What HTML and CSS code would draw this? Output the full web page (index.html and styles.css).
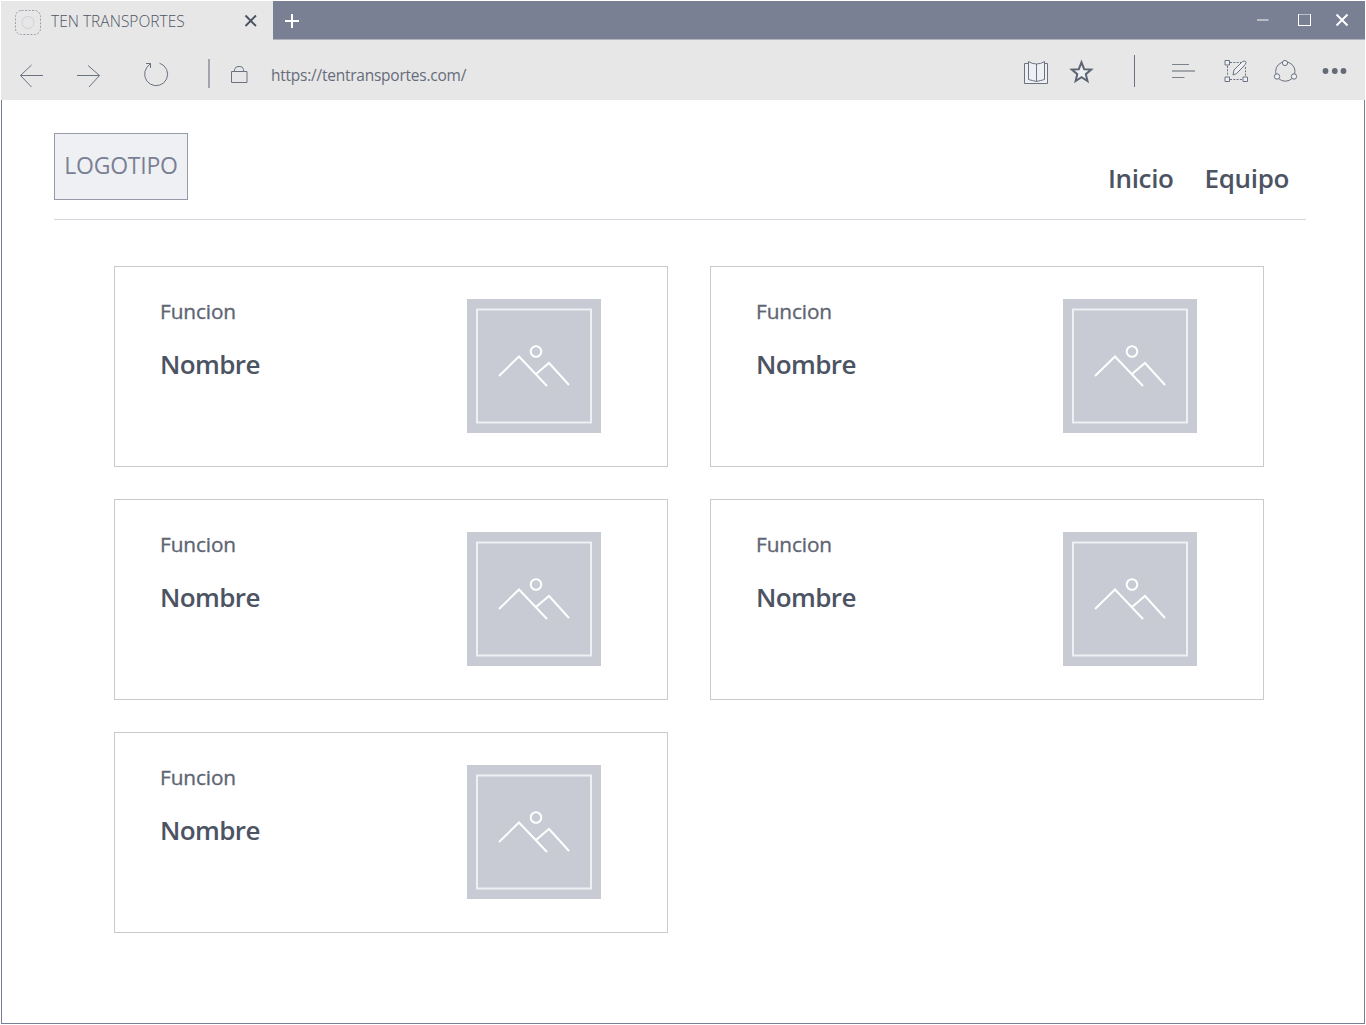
FILE: index.html
```html
<!DOCTYPE html>
<html lang="es">
<head>
<meta charset="utf-8">
<title>TEN TRANSPORTES</title>
<link rel="stylesheet" href="styles.css">
</head>
<body>
<svg width="0" height="0" class="defs">
  <symbol id="picture" viewBox="0 0 134 134">
    <rect width="134" height="134" fill="#c8cad4"/>
    <rect x="10" y="10.500" width="114" height="113" fill="none" stroke="#eff0f4" stroke-width="2"/>
    <g fill="none" stroke="#fff" stroke-width="2">
      <circle cx="69" cy="52.500" r="5.300"/>
      <path d="M32 77 52 57.500 80 87M69 75 82 64 102 86"/>
    </g>
  </symbol>
</svg>
<div class="window">
  <div class="titlebar">
    <div class="tab">
      <svg class="favicon" width="28" height="28" viewBox="14 8 28 28" fill="none">
        <rect x="15.500" y="10.500" width="25" height="24" rx="6" stroke="#9a9ea9" stroke-dasharray="2 1.500"/>
        <circle cx="28" cy="22.500" r="6" stroke="#cfd1d9"/>
      </svg>
      <span class="tab-title">TEN TRANSPORTES</span>
      <svg class="tab-close" width="14" height="14" viewBox="0 0 14 14"><path d="M1.500 1.500 12 12M12 1.500 1.500 12" stroke="#4a5160" stroke-width="1.900"/></svg>
    </div>
    <svg class="tab-new" width="16" height="16" viewBox="0 0 16 16"><path d="M1 8H15M8 1V15" stroke="#fff" stroke-width="2"/></svg>
    <svg class="controls" width="94" height="16" viewBox="1256 12 94 16" fill="none">
      <path d="M1257 20H1268.500" stroke="#c3c7d0" stroke-width="1.700"/>
      <rect x="1298.500" y="14.500" width="12" height="11" stroke="#fff"/><path d="M1299 14.500H1310" stroke="#b8c2c8"/>
      <path d="M1336.500 14.500 1347.500 25.500M1347.500 14.500 1336.500 25.500" stroke="#fff" stroke-width="1.900"/>
    </svg>
  </div>
  <div class="toolbar">
    <svg class="nav-tools" width="235" height="40" viewBox="15 54 235 40" fill="none" stroke="#6b7280">
      <path d="M43 75.500H20.500M31.500 65 20.500 75.500 31.500 87"/>
      <path d="M77 75.500H99.500M88 65.500 99.500 75.500 89 87"/>
      <path d="M159.500 63.200A11.500 11.500 0 1 1 147 67.200L150.500 63.500M146 63.500H150.500V68"/>
      <path d="M209 59V88" stroke="#8a8e98" stroke-width="1.500"/>
      <path d="M231.500 71.500H247V82.500H231.500ZM234.500 71V69.500Q235.500 66.500 238 66.500H240Q243 66.500 243.500 69.500V71"/>
    </svg>
    <span class="url">https://tentransportes.com/</span>
    <svg class="page-tools" width="330" height="40" viewBox="1020 51 330 40" fill="none" stroke="#6b7280">
      <path d="M1028 63.500H1024.500V83.500H1047.500V63.500H1044" fill="#eff0f4"/>
      <path d="M1036.500 64Q1032 64 1028.500 61.500V79.500Q1032 80.500 1036.500 81.500Q1041 80.500 1044.500 79.500V61.500Q1041 64 1036.500 64V81.500" fill="#eff0f4"/>
      <path d="M1081.500 62.300 1084.200 69.200 1091.200 69.600 1085.800 74.200 1087.500 81 1081.500 77.200 1075.600 81 1077.300 74.200 1071.800 69.600 1078.800 69.200Z" fill="#eff0f4" stroke="#5e6572" stroke-width="2"/>
      <path d="M1134.500 55V87"/>
      <path d="M1172 64.500H1189M1172 77.500H1184.500" stroke="#7c828c"/>
      <path d="M1172 71H1195" stroke="#a3a6aa" stroke-width="2"/>
      <path d="M1230 62.500H1244M1227.500 66V76M1230 79.500H1243M1245.500 67V76" stroke-dasharray="2 1.300"/>
      <g fill="#eff0f4"><path d="M1225 60.500h4.500v4.500h-4.500zM1225 77h4.500v4.500h-4.500zM1243 77h4.500v4.500h-4.500z"/><path d="M1233 75 1234 70 1242.500 61.500Q1245.500 60 1246 62.500Q1246 64 1243 67L1236.500 73.500Z"/></g>
      <circle cx="1285.300" cy="71.500" r="9.700"/>
      <g fill="#eff0f4"><circle cx="1285" cy="63" r="2.600"/><circle cx="1277" cy="76.500" r="2.700"/><circle cx="1294" cy="76.500" r="2.700"/></g>
      <g fill="#646a76" stroke="none"><circle cx="1325.500" cy="71" r="2.900"/><circle cx="1334.800" cy="71" r="2.900"/><circle cx="1343.500" cy="71" r="2.900"/></g>
    </svg>
  </div>
  <main class="page">
    <header class="header">
      <div class="logo"><span>LOGOTIPO</span></div>
      <nav class="menu"><a class="home">Inicio</a><a class="team">Equipo</a></nav>
    </header>
    <section class="cards">
      <article class="card"><div><p class="role">Funcion</p><h2 class="name">Nombre</h2></div><svg class="photo"><use href="#picture"/></svg></article>
      <article class="card"><div><p class="role">Funcion</p><h2 class="name">Nombre</h2></div><svg class="photo"><use href="#picture"/></svg></article>
      <article class="card"><div><p class="role">Funcion</p><h2 class="name">Nombre</h2></div><svg class="photo"><use href="#picture"/></svg></article>
      <article class="card"><div><p class="role">Funcion</p><h2 class="name">Nombre</h2></div><svg class="photo"><use href="#picture"/></svg></article>
      <article class="card"><div><p class="role">Funcion</p><h2 class="name">Nombre</h2></div><svg class="photo"><use href="#picture"/></svg></article>
    </section>
  </main>
</div>
</body>
</html>
```
FILE: styles.css
```css
* { box-sizing: border-box; }
body { margin: 0; padding: 1px; background: #fff; font-family: "Open Sans", "Noto Sans", sans-serif; white-space: nowrap; overflow: hidden; }
.defs { display: block; height: 0; }
svg { display: block; flex: none; }
.window { width: 1364px; height: 1023px; display: flex; flex-direction: column; }
.titlebar { height: 39px; flex: none; display: flex; align-items: flex-start; background: #7a8093; border-bottom: 1px solid #aeb1bc; }
.tab { width: 272px; height: 39px; flex: none; display: flex; background: #e7e7e7; }
.favicon { margin: 7px 0 0 13px; }
.tab-title { width: 202px; flex: none; padding-left: 9px; font-size: 15.500px; line-height: 22px; margin-top: 9px; font-weight: 300; color: #4f5664; letter-spacing: 0.02px; }
.tab-close { margin-top: 13px; }
.tab-new { margin: 12px 0 0 11px; }
.controls { margin: 11px 15px 0 auto; }
.toolbar { height: 60px; flex: none; display: flex; background: #e7e7e7; }
.nav-tools { margin: 14px 0 0 14px; }
.url { margin: 25px 0 0 21px; font-size: 15.500px; line-height: 20px; color: #666c79; letter-spacing: -0.24px; }
.page-tools { margin: 11px 15px 0 auto; }
.page { flex: 1; border: 1px solid #7a8093; border-top: 0; padding: 33px 58px 0 52px; }
.header { height: 87px; display: flex; justify-content: space-between; border-bottom: 1px solid #d3d5dc; }
.logo { width: 134px; height: 67px; display: flex; align-items: center; justify-content: center; border: 1px solid #979ba9; background: #eff0f4; color: #7a8093; font-size: 23px; font-weight: 400; letter-spacing: -0.25px; }
.logo span { position: relative; top: -2px; }
.menu { display: flex; gap: 31px; padding: 27px 17px 0 0; font-size: 26px; line-height: 36px; font-weight: 600; color: #4c5362; letter-spacing: -0.35px; }
.cards { display: grid; grid-template-columns: 554px 554px; grid-auto-rows: 201px; gap: 32px 42px; padding: 46px 0 0 60px; }
.card { display: flex; justify-content: space-between; border: 1px solid #c9cacc; padding: 32px 66px 0 45px; background: #fff; }
.role { margin: -1px 0 0; font-size: 20.800px; line-height: 26px; color: #5e6573; letter-spacing: -0.1px; -webkit-text-stroke: 0.35px currentColor; }
.name { margin: 24px 0 0; font-size: 26px; line-height: 32px; font-weight: 600; color: #4c5362; letter-spacing: -0.6px; }
.photo { width: 134px; height: 134px; }
```
